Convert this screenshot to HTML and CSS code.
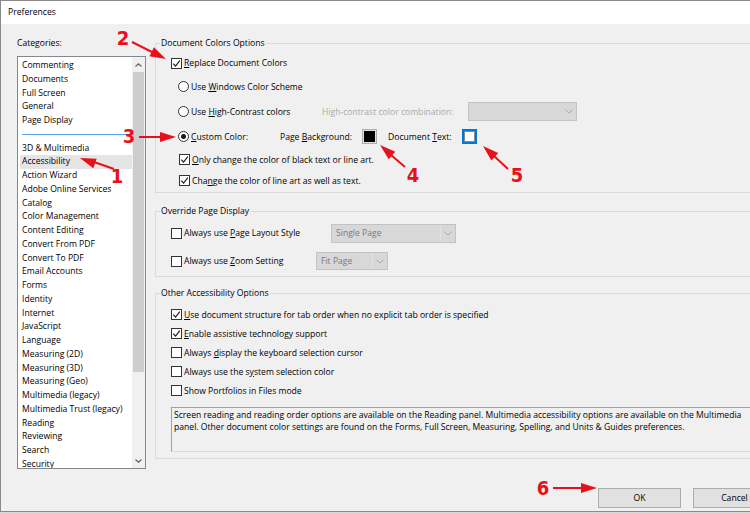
FILE: index.html
```html
<!DOCTYPE html>
<html>
    <head>
        <meta charset="utf-8">
        <title>Preferences</title>
        <link rel="stylesheet" href="styles.css">
    </head>
    <body>
        <div class="screen">
            <div class="dialog">
                <div class="title_bar">Preferences</div>
                <div class="dlg_body">
                    <div class="cat_col">
                        <div class="cat_label">Categories:</div>
                        <div class="cat_list">
                            <ul class="cat_items">
                                <li>Commenting</li>
                                <li>Documents</li>
                                <li>Full Screen</li>
                                <li>General</li>
                                <li>Page Display</li>
                                <li class="sep"></li>
                                <li>3D &amp; Multimedia</li>
                                <li class="on">Accessibility</li>
                                <li>Action Wizard</li>
                                <li>Adobe Online Services</li>
                                <li>Catalog</li>
                                <li>Color Management</li>
                                <li>Content Editing</li>
                                <li>Convert From PDF</li>
                                <li>Convert To PDF</li>
                                <li>Email Accounts</li>
                                <li>Forms</li>
                                <li>Identity</li>
                                <li>Internet</li>
                                <li>JavaScript</li>
                                <li>Language</li>
                                <li>Measuring (2D)</li>
                                <li>Measuring (3D)</li>
                                <li>Measuring (Geo)</li>
                                <li>Multimedia (legacy)</li>
                                <li>Multimedia Trust (legacy)</li>
                                <li>Reading</li>
                                <li>Reviewing</li>
                                <li>Search</li>
                                <li>Security</li>
                            </ul>
                            <div class="scroll_bar">
                                <span class="sb_btn"><svg width="7" height="4" viewBox="0 0 7 4"><polyline points="0.5,3.5 3.5,0.8 6.5,3.5" fill="none" stroke="#606060" stroke-width="1.1"/></svg></span>
                                <span class="sb_thumb"></span>
                                <span class="sb_track"></span>
                                <span class="sb_btn"><svg width="7" height="4" viewBox="0 0 7 4"><polyline points="0.5,0.5 3.5,3.2 6.5,0.5" fill="none" stroke="#606060" stroke-width="1.1"/></svg></span>
                            </div>
                        </div>
                    </div>

                    <div class="opt_col">
                        <fieldset class="group g_colors">
                            <legend>Document Colors Options</legend>
                            <div class="row row_main">
                                <span class="chk"><svg viewBox="0 0 9 9"><polyline points="1.2,4.6 3.6,7 7.8,1.6" fill="none" stroke="#222" stroke-width="1.2"/></svg></span>
                                <span class="txt"><u>R</u>eplace Document Colors</span>
                            </div>
                            <div class="row row_radio">
                                <span class="rad"></span>
                                <span class="txt">Use <u>W</u>indows Color Scheme</span>
                            </div>
                            <div class="row row_radio">
                                <span class="rad"></span>
                                <span class="txt w_contrast">Use <u>H</u>igh-Contrast colors</span>
                                <span class="txt dim">High-contrast color combination:</span>
                                <span class="combo c_contrast"><span class="combo_val"></span><span class="combo_arr"><svg width="8" height="5" viewBox="0 0 8 5"><polyline points="0.5,0.8 4,4 7.5,0.8" fill="none" stroke="#a8a8a8" stroke-width="1"/></svg></span></span>
                            </div>
                            <div class="row row_radio">
                                <span class="rad on"></span>
                                <span class="txt w_custom"><u>C</u>ustom Color:</span>
                                <span class="txt">Page <u>B</u>ackground:</span>
                                <span class="swatch s_page"><span class="swatch_in"></span></span>
                                <span class="txt">Document <u>T</u>ext:</span>
                                <span class="swatch s_text"><span class="swatch_in"></span></span>
                            </div>
                            <div class="row row_sub">
                                <span class="chk"><svg viewBox="0 0 9 9"><polyline points="1.2,4.6 3.6,7 7.8,1.6" fill="none" stroke="#222" stroke-width="1.2"/></svg></span>
                                <span class="txt"><u>O</u>nly change the color of black text or line art.</span>
                            </div>
                            <div class="row row_sub">
                                <span class="chk"><svg viewBox="0 0 9 9"><polyline points="1.2,4.6 3.6,7 7.8,1.6" fill="none" stroke="#222" stroke-width="1.2"/></svg></span>
                                <span class="txt">Cha<u>n</u>ge the color of line art as well as text.</span>
                            </div>
                        </fieldset>

                        <fieldset class="group g_override">
                            <legend>Override Page Display</legend>
                            <div class="row row_wide">
                                <span class="chk"></span>
                                <span class="txt w_layout">Always use <u>P</u>age Layout Style</span>
                                <span class="combo c_layout"><span class="combo_val">Single Page</span><span class="combo_arr"><svg width="8" height="5" viewBox="0 0 8 5"><polyline points="0.5,0.8 4,4 7.5,0.8" fill="none" stroke="#a8a8a8" stroke-width="1"/></svg></span></span>
                            </div>
                            <div class="row row_wide">
                                <span class="chk"></span>
                                <span class="txt w_zoom">Always use <u>Z</u>oom Setting</span>
                                <span class="combo c_zoom"><span class="combo_val">Fit Page</span><span class="combo_arr"><svg width="8" height="5" viewBox="0 0 8 5"><polyline points="0.5,0.8 4,4 7.5,0.8" fill="none" stroke="#a8a8a8" stroke-width="1"/></svg></span></span>
                            </div>
                        </fieldset>

                        <fieldset class="group g_other">
                            <legend>Other Accessibility Options</legend>
                            <div class="row row_list">
                                <span class="chk"><svg viewBox="0 0 9 9"><polyline points="1.2,4.6 3.6,7 7.8,1.6" fill="none" stroke="#222" stroke-width="1.2"/></svg></span>
                                <span class="txt"><u>U</u>se document structure for tab order when no explicit tab order is specified</span>
                            </div>
                            <div class="row row_list">
                                <span class="chk"><svg viewBox="0 0 9 9"><polyline points="1.2,4.6 3.6,7 7.8,1.6" fill="none" stroke="#222" stroke-width="1.2"/></svg></span>
                                <span class="txt"><u>E</u>nable assistive technology support</span>
                            </div>
                            <div class="row row_list">
                                <span class="chk"></span>
                                <span class="txt">Always <u>d</u>isplay the keyboard selection cursor</span>
                            </div>
                            <div class="row row_list">
                                <span class="chk"></span>
                                <span class="txt">Always use the s<u>y</u>stem selection color</span>
                            </div>
                            <div class="row row_list">
                                <span class="chk"></span>
                                <span class="txt">Show Portfolios in Files mode</span>
                            </div>
                            <div class="info_box">Screen reading and reading order options are available on the Reading panel. Multimedia accessibility options are available on the Multimedia<br>panel. Other document color settings are found on the Forms, Full Screen, Measuring, Spelling, and Units &amp; Guides preferences.</div>
                        </fieldset>
                    </div>
                </div>
                <div class="btn_row">
                    <button class="btn">OK</button>
                    <button class="btn">Cancel</button>
                </div>
            </div>

            <svg class="notes" width="750" height="513" viewBox="0 0 750 513">
                <g stroke="#e8101a" stroke-width="2" fill="none">
                    <line x1="114" y1="169" x2="94" y2="162"/>
                    <line x1="132" y1="42" x2="152" y2="52"/>
                    <line x1="139" y1="137" x2="161" y2="137"/>
                    <line x1="405" y1="167" x2="391" y2="155"/>
                    <line x1="508" y1="169" x2="494" y2="156"/>
                    <line x1="553" y1="488" x2="582" y2="488"/>
                </g>
                <g fill="#e8101a">
                    <polygon points="80,158 96.7,158.8 93.3,168.2"/>
                    <polygon points="166,59 149.5,56.3 153.9,47.3"/>
                    <polygon points="176,137 160,132 160,142"/>
                    <polygon points="380,145 395.3,151.8 388.7,159.3"/>
                    <polygon points="483,146 498.2,153.1 491.4,160.5"/>
                    <polygon points="597,488 581,483 581,493"/>
                    <text class="num" x="117" y="183">1</text>
                    <text class="num" x="123" y="45">2</text>
                    <text class="num" x="129" y="143">3</text>
                    <text class="num" x="413" y="182">4</text>
                    <text class="num" x="517" y="182">5</text>
                    <text class="num" x="543" y="495">6</text>
                </g>
            </svg>
        </div>
    </body>
</html>
```

FILE: styles.css
```css
html, body {
    margin:0;
    padding:0;
}
body {
    font-family:"Open Sans", "Noto Sans", sans-serif;
    font-size:8.6px;
    color:#000;
    background:#d9d9d9;
}
.screen {
    position:relative;
    width:750px;
    height:513px;
    overflow:hidden;
}
.dialog {
    width:790px;
    height:512px;
    box-sizing:border-box;
    border:1px solid #8a8a8a;
    border-right:none;
    background:#f0f0f0;
}
.title_bar {
    height:23px;
    line-height:23px;
    padding-left:7px;
    background:#fff;
}
.dlg_body {
    display:flex;
    gap:9px;
    padding-left:16px;
}

/* categories */
.cat_col {
    width:129px;
    flex:none;
}
.cat_label {
    height:14px;
    line-height:14px;
    margin-top:12px;
}
.cat_list {
    display:flex;
    height:413px;
    margin-top:6px;
    box-sizing:border-box;
    border:1px solid #828790;
    background:#fff;
}
.cat_items {
    flex:1;
    list-style:none;
    margin:0;
    padding:2px 0 0 2px;
    overflow:hidden;
}
.cat_items li {
    height:13.75px;
    line-height:13.75px;
    padding-left:2px;
    white-space:nowrap;
}
.cat_items li.on {
    background:#e5e5e5;
}
.cat_items li.sep {
    display:flex;
    align-items:center;
    padding-right:5px;
}
.cat_items li.sep::before {
    content:"";
    flex:1;
    height:1px;
    background:#5aa3e8;
}
.scroll_bar {
    width:13px;
    flex:none;
    display:flex;
    flex-direction:column;
    background:#f0f0f0;
}
.sb_btn {
    height:15px;
    display:flex;
    align-items:center;
    justify-content:center;
}
.sb_btn:last-child {
    height:14px;
}
.sb_thumb {
    height:300px;
    margin:0 1px;
    background:#cdcdcd;
}
.sb_track {
    flex:1;
}

/* option groups */
.opt_col {
    width:621px;
    flex:none;
}
.group {
    margin:0;
    padding:0 8px 0 4px;
    border:1px solid #dadada;
    min-width:0;
}
.group legend {
    height:14px;
    line-height:14px;
    padding:0 1px;
}
.g_colors {
    margin-top:12px;
    padding-top:2px;
    padding-bottom:1px;
}
.g_override {
    margin-top:11px;
    padding-top:1px;
    padding-bottom:1px;
}
.g_other {
    margin-top:9px;
    padding-top:5px;
    padding-bottom:6px;
}
.row {
    display:flex;
    align-items:center;
    white-space:nowrap;
}
.row_main {
    height:22px;
    padding-left:11px;
}
.row_radio {
    height:25px;
    padding-left:18px;
}
.row_sub {
    height:21px;
    padding-left:19px;
}
.row_wide {
    height:28px;
    padding-left:11px;
}
.row_list {
    height:19px;
    padding-left:11px;
}
.chk {
    width:11px;
    height:11px;
    flex:none;
    box-sizing:border-box;
    border:1px solid #333;
    background:#fff;
    display:flex;
    align-items:center;
    justify-content:center;
    margin-right:1px;
}
.chk svg {
    width:9px;
    height:9px;
}
.rad {
    width:11px;
    height:11px;
    flex:none;
    box-sizing:border-box;
    border:1px solid #333;
    border-radius:50%;
    background:#fff;
    display:flex;
    align-items:center;
    justify-content:center;
    margin-right:1px;
}
.rad.on::after {
    content:"";
    width:5px;
    height:5px;
    border-radius:50%;
    background:#1a1a1a;
}
.txt {
    padding-left:1px;
}
.dim {
    color:#a9a9a9;
}
.w_contrast {
    width:130px;
}
.w_custom {
    width:88px;
}
.w_layout {
    width:147px;
}
.w_zoom {
    width:132px;
}

/* disabled combo boxes */
.combo {
    display:flex;
    height:19px;
    box-sizing:border-box;
    border:1px solid #c3c3c3;
    background:#d8d8d8;
    color:#7a7a7a;
}
.combo_val {
    flex:1;
    line-height:17px;
    padding-left:4px;
}
.combo_arr {
    width:14px;
    display:flex;
    align-items:center;
    justify-content:center;
    border-left:1px solid #e2e2e2;
}
.c_contrast {
    width:109px;
    margin-left:14px;
}
.c_contrast .combo_arr {
    border-left:none;
}
.c_layout {
    width:125px;
}
.c_zoom {
    width:72px;
    height:18px;
}

/* colour swatches */
.swatch {
    width:15px;
    height:15px;
    box-sizing:border-box;
    display:flex;
    align-items:center;
    justify-content:center;
    margin:0 10px 0 10px;
}
.s_page {
    border:1px solid #adadad;
    background:#e1e1e1;
}
.s_page .swatch_in {
    width:11px;
    height:11px;
    background:#000;
}
.s_text {
    border:2px solid #0078d7;
    margin-left:10px;
}
.s_text .swatch_in {
    width:9px;
    height:9px;
    border:1px solid #8a8a8a;
    background:#fff;
}

.info_box {
    height:45px;
    margin:7px 0 0 11px;
    box-sizing:border-box;
    padding:1px 2px;
    border:1px solid #a0a0a0;
    border-bottom-color:#dcdcdc;
    border-right-color:#dcdcdc;
    line-height:12px;
    white-space:nowrap;
}

/* buttons */
.btn_row {
    display:flex;
    justify-content:flex-end;
    gap:12px;
    margin-top:19px;
    padding-right:14px;
}
.btn {
    width:83px;
    height:20px;
    padding:0;
    border:1px solid #adadad;
    background:#e1e1e1;
    font:inherit;
    color:#000;
}

/* red call-outs */
.notes {
    position:absolute;
    left:0;
    top:0;
    pointer-events:none;
}
.num {
    font-family:"DejaVu Sans Condensed", "DejaVu Sans", sans-serif;
    font-stretch:condensed;
    font-weight:bold;
    font-size:20px;
    text-anchor:middle;
}
```
